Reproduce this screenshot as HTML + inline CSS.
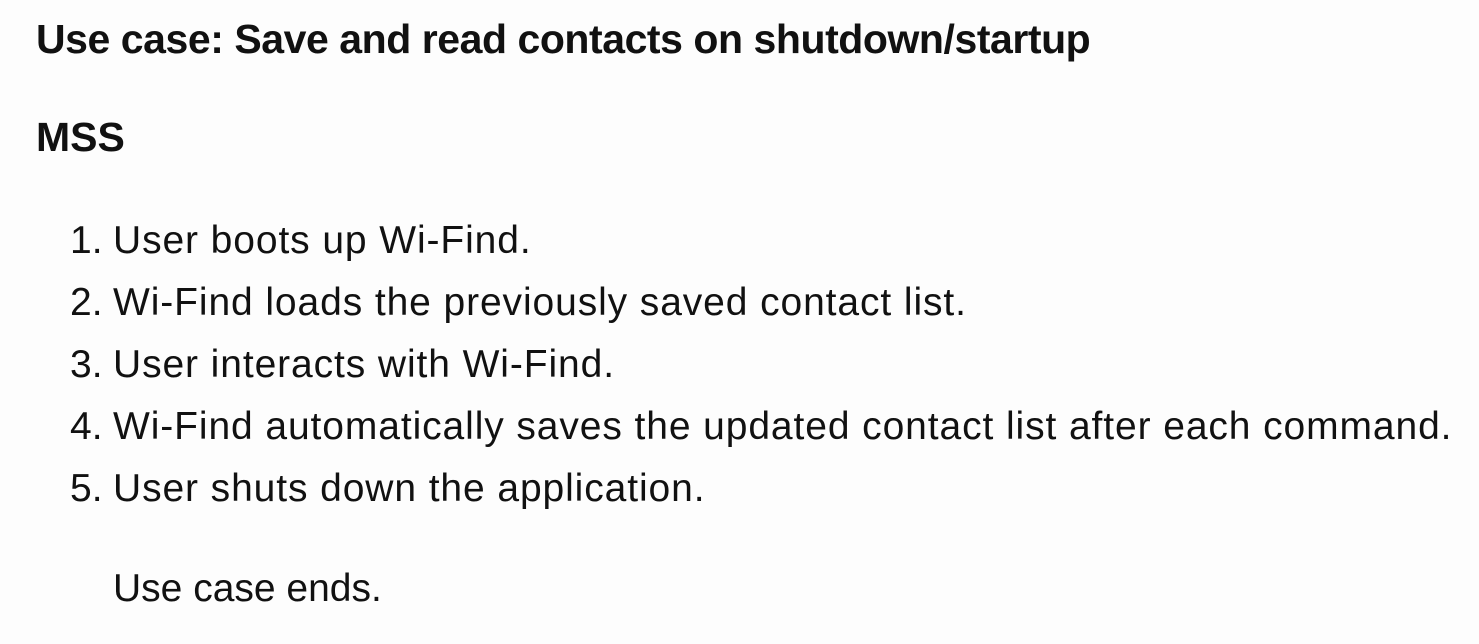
<!DOCTYPE html>
<html><head><meta charset="utf-8"><style>
html,body{margin:0;padding:0;background:#fdfdfd;width:1479px;height:644px;overflow:hidden}
body{font-family:"Liberation Sans",sans-serif;color:#111}
.t{position:absolute;white-space:nowrap;line-height:1}
.h{font-weight:bold;font-size:41px}
.l{font-size:39px;letter-spacing:0.9px;left:113px}
.n{font-size:39px;left:70px}
</style></head><body>
<div class="t h" style="left:36px;top:19px;letter-spacing:-0.45px">Use case: Save and read contacts on shutdown/startup</div>
<div class="t h" style="left:36px;top:117px">MSS</div>
<div class="t n" style="top:221px">1.</div><div class="t l" style="top:221px">User boots up Wi-Find.</div>
<div class="t n" style="top:283px">2.</div><div class="t l" style="top:283px">Wi-Find loads the previously saved contact list.</div>
<div class="t n" style="top:345px">3.</div><div class="t l" style="top:345px">User interacts with Wi-Find.</div>
<div class="t n" style="top:407px">4.</div><div class="t l" style="top:407px">Wi-Find automatically saves the updated contact list after each command.</div>
<div class="t n" style="top:469px">5.</div><div class="t l" style="top:469px">User shuts down the application.</div>
<div class="t l" style="top:569px;letter-spacing:0">Use case ends.</div>
</body></html>
